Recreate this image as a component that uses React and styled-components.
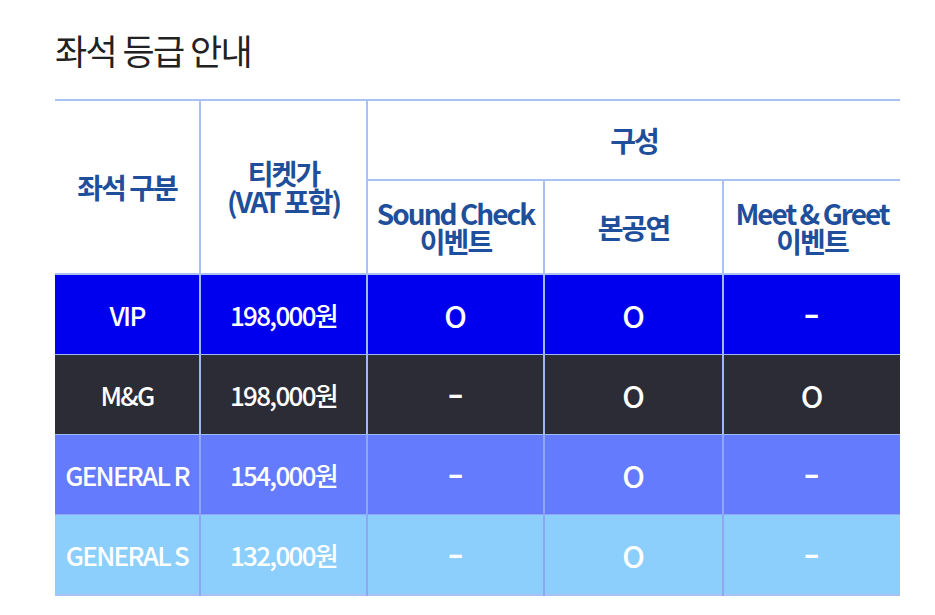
import React from 'react';
import styled, { createGlobalStyle } from 'styled-components';

const Global = createGlobalStyle`
body {
  margin: 0;
  background: #fff;
  font-family: "Noto Sans CJK KR", "Noto Sans", sans-serif;
}
`

const Page = styled.div`
padding: 30px 35px 0 55px;
`
const Title = styled.h2`
margin: 0 0 29px 0;
font-size: 35px;
line-height: 40px;
font-weight: 400;
color: #222;
letter-spacing: -1.6px;
`
const Table = styled.table`
width: 845px;
border-collapse: collapse;
table-layout: fixed;
border-top: 2px solid #a9c2f2;
border-bottom: 2px solid #a9c2f2;
`
const Th = styled.th`
height: ${(p) => p.h}px;
padding: 0;
color: #1f4f9a;
font-size: 28px;
line-height: 28px;
font-weight: 700;
letter-spacing: -2px;
text-align: center;
vertical-align: middle;
border-left: 2px solid #a9c2f2;
border-bottom: 2px solid #a9c2f2;
&:first-child {
  border-left: none;
}
`
const SubTh = styled(Th)`
&:first-child {
  border-left: 2px solid #a9c2f2;
}
`
const Td = styled.td`
height: 79px;
padding: 0;
background: ${(p) => p.bg};
color: #fff;
font-size: ${(p) => (p.mark ? '30px' : '26px')};
font-weight: 500;
letter-spacing: ${(p) => (p.mark ? '0' : '-1.7px')};
text-align: center;
vertical-align: middle;
border-left: 2px solid ${(p) => p.line};
border-bottom: 1px solid ${(p) => p.line};
&:first-child {
  border-left: none;
}
`
const Dash = styled.span`
display: inline-block;
font-weight: 700;
transform: scaleX(1.5) translateY(-3px);
`

const rows = [
  { name: 'VIP', price: '198,000원', marks: ['O', 'O', '-'], bg: '#0000ef', line: '#9db8f3' },
  { name: 'M&G', price: '198,000원', marks: ['-', 'O', 'O'], bg: '#2c2c36', line: '#9db8f3' },
  { name: 'GENERAL R', price: '154,000원', marks: ['-', 'O', '-'], bg: '#637bfc', line: '#8ea6f4' },
  { name: 'GENERAL S', price: '132,000원', marks: ['-', 'O', '-'], bg: '#8ccffd', line: '#8ea6f4' },
]

const App = () => {
  return (
    <Page>
      <Global />
      <Title>좌석 등급 안내</Title>
      <Table>
        <colgroup>
          <col style={{ width: 145 }} />
          <col style={{ width: 167 }} />
          <col style={{ width: 177 }} />
          <col style={{ width: 179 }} />
          <col style={{ width: 177 }} />
        </colgroup>
        <thead>
          <tr>
            <Th h={78} rowSpan={2}>좌석 구분</Th>
            <Th h={78} rowSpan={2}>티켓가<br />(VAT 포함)</Th>
            <Th h={78} colSpan={3}>구성</Th>
          </tr>
          <tr>
            <SubTh h={92}>Sound Check<br />이벤트</SubTh>
            <SubTh h={92}>본공연</SubTh>
            <SubTh h={92}>Meet &amp; Greet<br />이벤트</SubTh>
          </tr>
        </thead>
        <tbody>
          {rows.map((r) => (
            <tr key={r.name}>
              <Td bg={r.bg} line={r.line}>{r.name}</Td>
              <Td bg={r.bg} line={r.line}>{r.price}</Td>
              {r.marks.map((m, i) => (
                <Td key={i} bg={r.bg} line={r.line} mark>
                  {m === '-' ? <Dash>-</Dash> : m}
                </Td>
              ))}
            </tr>
          ))}
        </tbody>
      </Table>
    </Page>
  );
};

export default App;
